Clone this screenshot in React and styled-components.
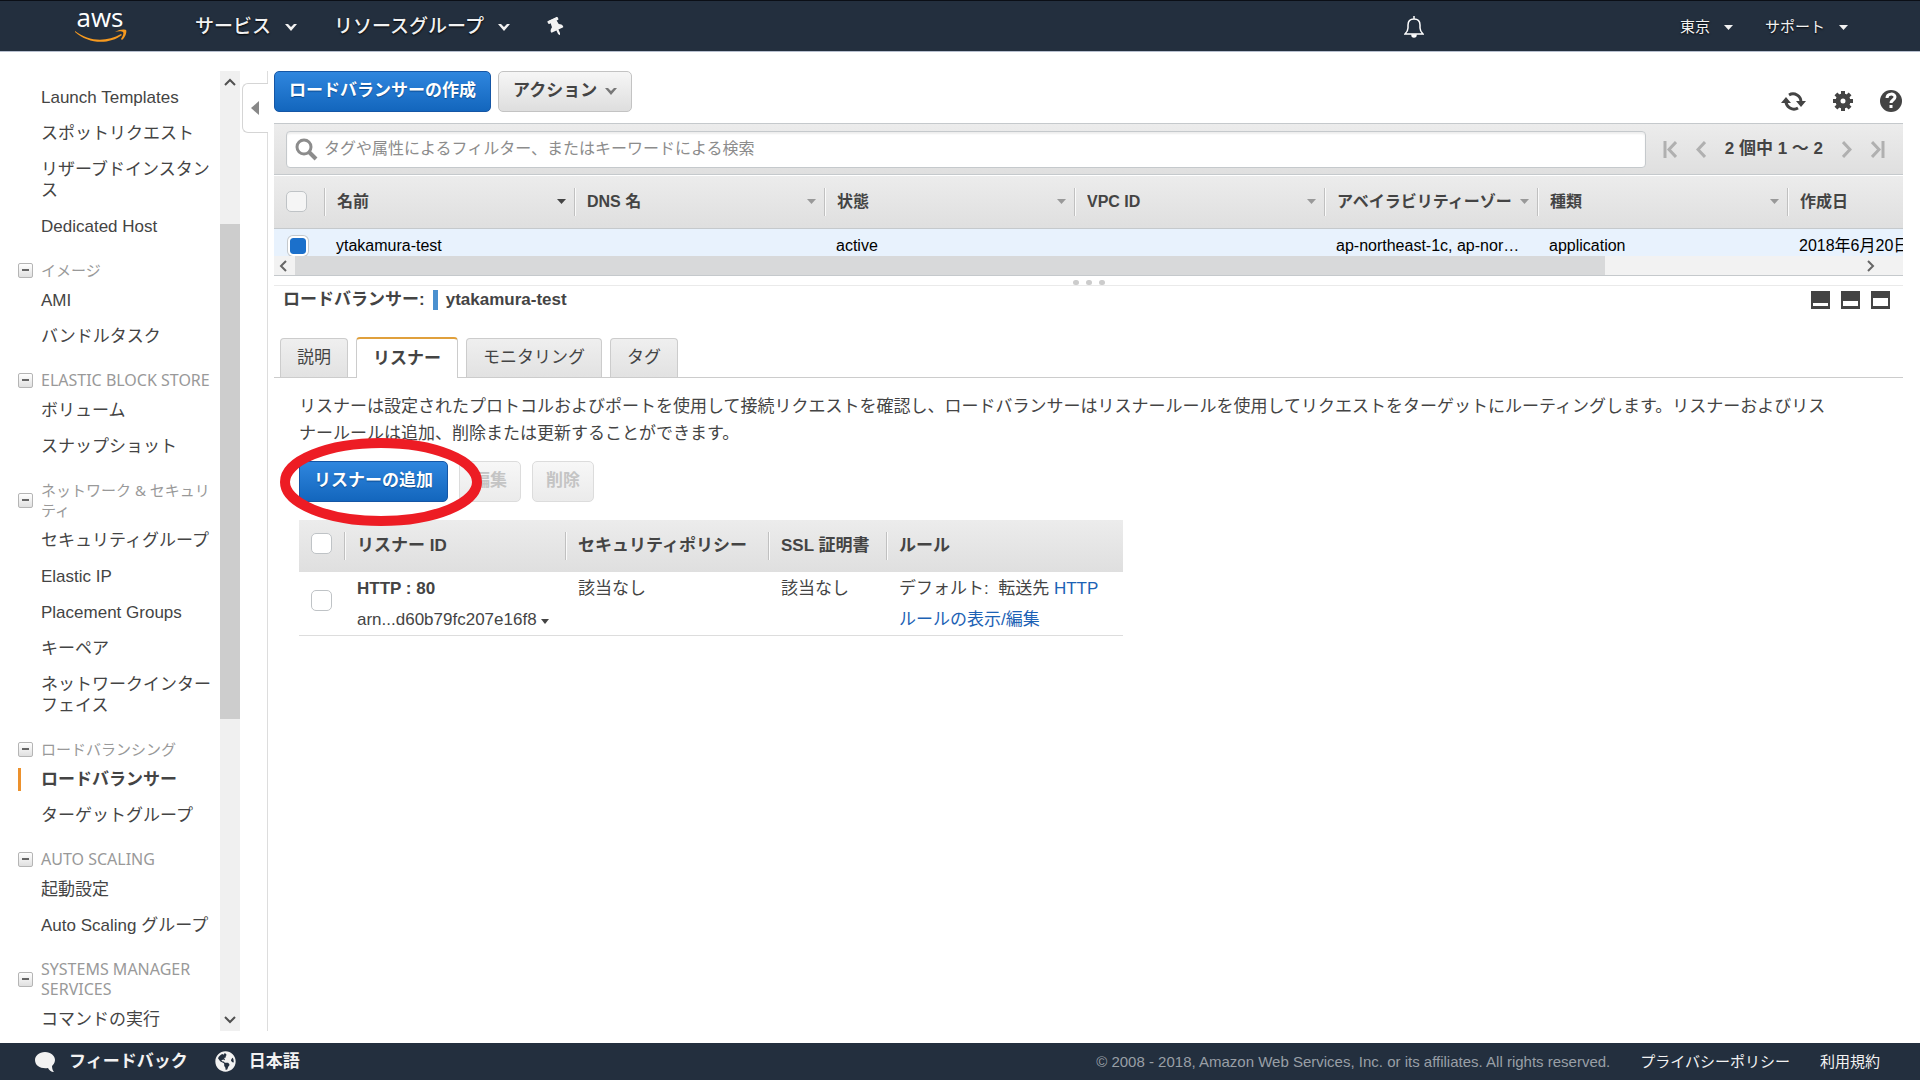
import React from 'react';
import styled, { createGlobalStyle, css } from 'styled-components';
import { FaGlobeAmericas, FaThumbtack } from 'react-icons/fa';

const GlobalStyle = createGlobalStyle`
  * { box-sizing: border-box; }
  html, body, #root { height: 100%; }
  body {
    margin: 0;
    overflow: hidden;
    background: #fff;
    color: #444;
    font: 17px/22px "Liberation Sans", "Noto Sans CJK JP", sans-serif;
  }
  button, input { font: inherit; }
  a { color: inherit; text-decoration: none; }
`;

const Page = styled.div`
  height: 100vh;
  display: flex;
  flex-direction: column;
`;

/* ---------- top bar ---------- */

const TopBar = styled.header`
  display: flex;
  align-items: center;
  flex: none;
  height: 52px;
  padding: 2px 72px 0 74px;
  background: #232f3e;
  border-top: 1px solid #0b0f16;
  border-bottom: 1px solid #b8c0d0;
  color: #f2f2f2;
`;

const Logo = styled.a`
  display: flex;
  margin-right: 67px;
  svg { overflow: visible; }
`;

const NavButton = styled.button`
  display: flex;
  align-items: center;
  gap: 14px;
  padding: 0;
  margin-right: ${(p) => (p.$small ? 0 : 37)}px;
  margin-left: ${(p) => (p.$small ? 32 : 0)}px;
  border: 0;
  background: none;
  color: #f2f2f2;
  font-size: ${(p) => (p.$small ? 15 : 19)}px;
  font-weight: ${(p) => (p.$small ? 400 : 500)};
  text-shadow: 0 1px 2px #000;
`;

const IconButton = styled.button`
  display: flex;
  align-items: center;
  padding: 0;
  border: 0;
  background: none;
  color: inherit;
`;

const PinIcon = styled(FaThumbtack)`
  width: 18px;
  height: 18px;
  transform: rotate(-25deg);
`;

const Spacer = styled.div`
  flex: 1;
`;

const RightNav = styled.div`
  display: flex;
  margin-left: 224px;
`;

/* ---------- body ---------- */

const Body = styled.div`
  flex: 1;
  min-height: 0;
  display: flex;
  padding: 19px 17px 12px 0;
`;

const Sidebar = styled.aside`
  width: 220px;
  flex: none;
  overflow: hidden;
  padding-top: 8px;
`;

const Group = styled.section`
  margin-bottom: 16px;
`;

const GroupTitle = styled.h3`
  display: flex;
  align-items: center;
  gap: 8px;
  margin: 0 0 2px;
  padding-left: 18px;
  color: #999;
  font: 400 ${(p) => (p.$latin ? 16 : 15)}px/20px "Noto Sans", "Noto Sans CJK JP", sans-serif;
`;

const Toggle = styled.button`
  flex: none;
  display: flex;
  align-items: center;
  justify-content: center;
  width: 15px;
  height: 15px;
  padding: 0;
  border: 1px solid #b5b5b5;
  border-radius: 2px;
  background: linear-gradient(#fff, #e0e0e0);
  &::before {
    content: '';
    width: 7px;
    height: 2px;
    background: #666;
  }
`;

const MenuItem = styled.a`
  display: block;
  padding: 8px 0 7px 41px;
  line-height: 21px;
  color: #444;
  ${(p) => p.$active && css`
    font-weight: 700;
    background: linear-gradient(#ec912d, #ec912d) 18px 7px / 3px 23px no-repeat;
  `}
`;

const ScrollBar = styled.div`
  flex: none;
  width: 20px;
  display: flex;
  flex-direction: column;
  align-items: center;
  padding: 6px 0;
  background: #f0f0f0;
  color: #505050;
`;

const ScrollThumb = styled.div`
  width: 100%;
  height: 495px;
  margin: 135px 0 auto;
  background: #cdcdcd;
`;

const Divider = styled.div`
  flex: none;
  width: 28px;
  margin-right: 6px;
  border-right: 1px solid #ddd;
`;

const Collapse = styled.button`
  display: flex;
  align-items: center;
  justify-content: center;
  width: 26px;
  height: 50px;
  margin: 12px 0 0 2px;
  padding: 0 2px 0 0;
  border: 1px solid #d5d5d5;
  border-right: 0;
  border-radius: 6px 0 0 6px;
  background: #fff;
  color: #888;
`;

const Main = styled.main`
  flex: 1;
  min-width: 0;
  display: flex;
  flex-direction: column;
`;

const Toolbar = styled.div`
  display: flex;
  gap: 7px;
`;

const Tools = styled.div`
  display: flex;
  gap: 27px;
  margin: 19px 1px 0 auto;
  color: #444;
`;

const Button = styled.button`
  display: flex;
  align-items: center;
  gap: 8px;
  height: 41px;
  padding: 0 14px 2px;
  border: 1px solid #c3c3c3;
  border-radius: 5px;
  background: linear-gradient(#f6f6f6, #dedede);
  color: #444;
  font-weight: 700;
  svg { color: #777; }
  ${(p) => p.$primary && css`
    border-color: #1556a5;
    background: linear-gradient(#2f86de, #1366bd);
    color: #fff;
    text-shadow: 0 1px 1px #0b4a8f;
  `}
  &:disabled {
    padding: 0 13px 2px;
    border-color: #dcdcdc;
    background: linear-gradient(#f7f7f7, #ebebeb);
    color: #c4c4c4;
  }
`;

const FilterBar = styled.div`
  display: flex;
  align-items: center;
  gap: 17px;
  height: 52px;
  margin-top: 11px;
  padding: 0 18px 0 12px;
  border-top: 1px solid #c5c9cc;
  border-bottom: 1px solid #c5c9cc;
  background: linear-gradient(#ececec, #dfdfdf);
`;

const SearchBox = styled.label`
  flex: 1;
  display: flex;
  align-items: center;
  gap: 4px;
  height: 37px;
  padding: 0 8px;
  border: 1px solid #c5c9cc;
  border-radius: 4px;
  background: #fff;
  box-shadow: inset 0 2px 2px #eee;
  color: #8c8c8c;
`;

const SearchInput = styled.input`
  flex: 1;
  border: 0;
  outline: 0;
  background: none;
  font-size: 16px;
  &::placeholder { color: #8c8c8c; opacity: 1; }
`;

const Pager = styled.div`
  display: flex;
  align-items: center;
  gap: 19px;
  color: #444;
  font-weight: 700;
  & > button { color: #b0b0b0; }
`;

const GridWrap = styled.div`
  height: 100px;
  margin-top: 1px;
  overflow: hidden;
  display: flex;
  flex-direction: column;
  border-bottom: 1px solid #c5c9cc;
`;

const Grid = styled.table`
  width: 100%;
  table-layout: fixed;
  border-collapse: collapse;
  white-space: nowrap;
  font-size: 16px;
  th {
    height: 52px;
    padding: 0;
    border-bottom: 1px solid #c5c9cc;
    text-align: left;
    background: linear-gradient(#ececec, #dfdfdf);
  }
  td {
    height: 28px;
    padding: 7px 0 0 12px;
    overflow: hidden;
    background: #e8f2fd;
    color: #000;
    line-height: 20px;
  }
`;

const HeadCell = styled.div`
  display: flex;
  align-items: center;
  gap: 2px;
  height: 28px;
  padding: 0 8px 0 12px;
  overflow: hidden;
  border-left: ${(p) => (p.$plain ? '0' : '1px solid #c0c0c0')};
  box-shadow: ${(p) => (p.$plain ? 'none' : 'inset 1px 0 #fafafa')};
  color: ${(p) => (p.$sorted ? '#444' : '#999')};
  span {
    flex: 1;
    min-width: 0;
    overflow: hidden;
    color: #444;
  }
`;

const Check = styled.input`
  appearance: none;
  display: block;
  width: 21px;
  height: 21px;
  margin: 0;
  border: 1px solid #bfc3c6;
  border-radius: 5px;
  background: ${(p) => (p.$soft ? '#f5f5f5' : '#fff')};
  &:checked {
    width: 20px;
    height: 20px;
    margin-left: 2px;
    border: 2px solid #fff;
    background: #1b70cb;
    background-clip: padding-box;
    box-shadow: 0 0 0 1px #c5c9cc;
  }
`;

const HScroll = styled.div`
  flex: 1;
  display: flex;
  align-items: center;
  gap: 5px;
  padding: 0 27px 0 4px;
  background: #f2f2f2;
  color: #666;
`;

const HThumb = styled.div`
  width: 82%;
  margin-right: auto;
  align-self: stretch;
  background: #d8d9da;
`;

const Splitter = styled.div`
  display: flex;
  justify-content: center;
  align-items: flex-end;
  gap: 7px;
  height: 10px;
  border-bottom: 1px solid #eaeaea;
  span {
    width: 6px;
    height: 5px;
    border-radius: 3px;
    background: #ccc;
  }
`;

const DetailHead = styled.div`
  display: flex;
  align-items: center;
  gap: 8px;
  padding: 3px 13px 0 9px;
  font-weight: 700;
`;

const Marker = styled.span`
  width: 5px;
  height: 20px;
  background: #4a90cf;
`;

const PanelIcons = styled.div`
  display: flex;
  gap: 11px;
  margin-left: auto;
`;

const Tabs = styled.div`
  display: flex;
  align-items: flex-end;
  gap: 8px;
  margin-top: 26px;
  padding-left: 6px;
  border-bottom: 1px solid #ccc;
`;

const Tab = styled.button`
  height: 39px;
  padding: 0 16px;
  border: 1px solid #ccc;
  border-bottom: 0;
  border-radius: 4px 4px 0 0;
  background: linear-gradient(#efefef, #e2e2e2);
  color: #444;
  ${(p) => p.$active && css`
    height: 41px;
    margin-bottom: -1px;
    border-top: 2px solid #e0a03c;
    background: #fff;
    font-weight: 700;
  `}
`;

const Description = styled.p`
  margin: 0 0 14px;
  padding: 15px 66px 0 25px;
  line-height: 27px;
`;

const Actions = styled.div`
  position: relative;
  display: flex;
  gap: 11px;
  padding-left: 25px;
`;

const Highlight = styled.svg`
  position: absolute;
  left: 6px;
  top: -24px;
  pointer-events: none;
`;

const Listeners = styled.table`
  margin: 18px 0 0 25px;
  width: 824px;
  border-collapse: collapse;
  table-layout: fixed;
  border-bottom: 1px solid #ddd;
  th {
    height: 52px;
    padding: 0;
    text-align: left;
    background: linear-gradient(#ececec, #dfdfdf);
  }
  td {
    padding: 1px 0 0 13px;
    vertical-align: top;
    line-height: 31px;
    white-space: nowrap;
  }
  th:first-child {
    padding-bottom: 5px;
  }
  td:first-child {
    padding: 0 0 6px 12px;
    vertical-align: middle;
  }
  td svg { vertical-align: 1px; }
`;

const Link = styled.a`
  color: #1c62b5;
`;

/* ---------- footer ---------- */

const Footer = styled.footer`
  display: flex;
  align-items: center;
  flex: none;
  height: 37px;
  padding: 0 40px 0 34px;
  gap: 27px;
  background: #232f3e;
  color: #f2f2f2;
  font-size: 15px;
`;

const FootButton = styled.button`
  display: flex;
  align-items: center;
  gap: 13px;
  padding: 0;
  border: 0;
  background: none;
  color: #f2f2f2;
  font-size: 17px;
  font-weight: 700;
`;

const Legal = styled.div`
  display: flex;
  gap: 30px;
  margin-left: auto;
`;

const Copyright = styled.span`
  color: #999fa6;
`;

const Caret = ({ size = 9 }) => (
  <svg width={size} height="5" viewBox="0 0 10 6" preserveAspectRatio="none" fill="currentColor">
    <path d="M0 0h10L5 6z" />
  </svg>
);

const Chevron = ({ dir = 'down' }) => {
  const turn = { down: 0, left: 90, up: 180, right: 270 }[dir];
  return (
    <svg width="12" height="12" viewBox="0 0 12 12" fill="none" stroke="currentColor" strokeWidth="2">
      <path d="M1 4l5 5 5-5" transform={`rotate(${turn} 6 6)`} />
    </svg>
  );
};

const PageArrow = ({ next, bar }) => {
  const w = bar ? 14 : 10;
  return (
    <svg width={w} height="17" viewBox={`0 0 ${w} 17`} fill="none" stroke="currentColor" strokeWidth="3">
      <g transform={next ? undefined : `translate(${w} 0) scale(-1 1)`}>
        <path d="M1 1l7 7.500L1 16" />
        {bar && <path d="M12 0v17" />}
      </g>
    </svg>
  );
};

const NavChevron = () => (
  <svg width="12" height="8" viewBox="0 0 12 8" fill="currentColor">
    <path d="M0 1h3l3 3 3-3h3L6 8z" />
  </svg>
);

const AwsLogo = () => (
  <svg width="54" height="36" viewBox="0 0 54 36">
    <text x="26" y="18" textAnchor="middle" fill="#fff" fontFamily="Open Sans, sans-serif" fontSize="26">aws</text>
    <path d="M1 22c14 11 32 11 46 3l1 1C35 36 14 35 1 23z" fill="#f79a1f" />
    <path d="M41 23c4-3 10-3 11-2s0 7-4 10l-1-1c2-3 3-6 2-7s-5-1-8 0z" fill="#f79a1f" />
  </svg>
);

const Bell = () => (
  <svg width="20" height="22" viewBox="0 0 20 22" fill="none" stroke="#fff" strokeWidth="1.500">
    <path d="M10 0v3M1 18h18c-2-2-3-4-3-6V9c0-4-2-6-6-6S4 5 4 9v3c0 2-1 4-3 6z" />
    <path d="M8 19a2 2 0 0 0 4 0z" fill="#fff" />
  </svg>
);

const Refresh = () => (
  <svg width="25" height="21" viewBox="0 0 25 21">
    <path d="M8 4a8 8 0 0 1 12 7M17 17A8 8 0 0 1 5 10" fill="none" stroke="currentColor" strokeWidth="3" />
    <path d="M15 10h10l-5 6zM0 12h10L5 6z" fill="currentColor" />
  </svg>
);

const Gear = () => (
  <svg width="20" height="20" viewBox="0 0 20 20">
    <circle cx="10" cy="10" r="5" fill="none" stroke="currentColor" strokeWidth="5" />
    {[0, 45, 90, 135].map((a) => (
      <path key={a} d="M8 0h4v4H8zM8 16h4v4H8z" fill="currentColor" transform={`rotate(${a} 10 10)`} />
    ))}
  </svg>
);

const Help = () => (
  <svg width="22" height="22" viewBox="0 0 22 22">
    <circle cx="11" cy="11" r="11" fill="currentColor" />
    <path d="M7 8c0-5 8-5 8-1 0 3-4 3-4 6" fill="none" stroke="#fff" strokeWidth="3" />
    <path d="M9.500 15h3v3h-3z" fill="#fff" />
  </svg>
);

const Magnifier = () => (
  <svg width="23" height="23" viewBox="0 0 23 23" fill="none" stroke="#8c8c8c">
    <circle cx="9" cy="9" r="7" strokeWidth="3" />
    <path d="M14 14l7 7" strokeWidth="4" />
  </svg>
);

const Panel = ({ y }) => (
  <svg width="19" height="18" viewBox="0 0 19 18">
    <path d="M0 0h19v18H0z" fill="#444" />
    <path d={`M2 ${y}h15v${15 - y}H2z`} fill="#fff" />
  </svg>
);

const Bubble = () => (
  <svg width="22" height="22" viewBox="0 0 22 22" fill="#f2f2f2">
    <path d="M11 1c6 0 10 4 10 8 0 3-2 5-3 6 0 3 1 5 2 6-3 0-5-2-6-4-7 1-13-2-13-8 0-4 4-8 10-8z" />
  </svg>
);

const menu = [
  { items: ['Launch Templates', 'スポットリクエスト', 'リザーブドインスタンス', 'Dedicated Host'] },
  { title: 'イメージ', items: ['AMI', 'バンドルタスク'] },
  { title: 'ELASTIC BLOCK STORE', latin: true, items: ['ボリューム', 'スナップショット'] },
  {
    title: 'ネットワーク & セキュリティ',
    items: ['セキュリティグループ', 'Elastic IP', 'Placement Groups', 'キーペア', 'ネットワークインターフェイス'],
  },
  { title: 'ロードバランシング', items: ['ロードバランサー', 'ターゲットグループ'] },
  { title: 'AUTO SCALING', latin: true, items: ['起動設定', 'Auto Scaling グループ'] },
  { title: 'SYSTEMS MANAGER SERVICES', latin: true, items: ['コマンドの実行'] },
];

const columns = [
  { name: '名前', width: 250, value: 'ytakamura-test' },
  { name: 'DNS 名', width: 250, value: '' },
  { name: '状態', width: 250, value: 'active' },
  { name: 'VPC ID', width: 250, value: '' },
  { name: 'アベイラビリティーゾー', width: 213, value: 'ap-northeast-1c, ap-nor…' },
  { name: '種類', width: 250, value: 'application' },
  { name: '作成日', value: '2018年6月20日' },
];

const tabs = ['説明', 'リスナー', 'モニタリング', 'タグ'];

function App() {
  return (
    <Page>
      <GlobalStyle />
      <TopBar>
        <Logo href="#" aria-label="aws"><AwsLogo /></Logo>
        <NavButton>サービス <NavChevron /></NavButton>
        <NavButton>リソースグループ <NavChevron /></NavButton>
        <IconButton aria-label="ピン"><PinIcon /></IconButton>
        <Spacer />
        <IconButton aria-label="通知"><Bell /></IconButton>
        <RightNav>
          <NavButton $small>東京 <Caret /></NavButton>
          <NavButton $small>サポート <Caret /></NavButton>
        </RightNav>
      </TopBar>

      <Body>
        <Sidebar>
          {menu.map((group, i) => (
            <Group key={i}>
              {group.title && (
                <GroupTitle $latin={group.latin}>
                  <Toggle aria-label={group.title} />
                  {group.title}
                </GroupTitle>
              )}
              {group.items.map((item) => (
                <MenuItem key={item} href="#" $active={item === 'ロードバランサー'}>{item}</MenuItem>
              ))}
            </Group>
          ))}
        </Sidebar>
        <ScrollBar>
          <Chevron dir="up" />
          <ScrollThumb />
          <Chevron />
        </ScrollBar>
        <Divider>
          <Collapse aria-label="閉じる">
            <svg width="8" height="14" viewBox="0 0 8 14" fill="currentColor"><path d="M8 0v14L0 7z" /></svg>
          </Collapse>
        </Divider>

        <Main>
          <Toolbar>
            <Button $primary>ロードバランサーの作成</Button>
            <Button>アクション <NavChevron /></Button>
            <Tools>
              <IconButton aria-label="更新"><Refresh /></IconButton>
              <IconButton aria-label="設定"><Gear /></IconButton>
              <IconButton aria-label="ヘルプ"><Help /></IconButton>
            </Tools>
          </Toolbar>

          <FilterBar>
            <SearchBox>
              <Magnifier />
              <SearchInput placeholder="タグや属性によるフィルター、またはキーワードによる検索" />
            </SearchBox>
            <Pager>
              <IconButton aria-label="最初"><PageArrow bar /></IconButton>
              <IconButton aria-label="前"><PageArrow /></IconButton>
              <span>2 個中 1 ～ 2</span>
              <IconButton aria-label="次"><PageArrow next /></IconButton>
              <IconButton aria-label="最後"><PageArrow next bar /></IconButton>
            </Pager>
          </FilterBar>

          <GridWrap>
            <Grid>
              <colgroup>
                <col width="50" />
                {columns.map((c) => <col key={c.name} width={c.width} />)}
              </colgroup>
              <thead>
                <tr>
                  <th><HeadCell $plain><Check type="checkbox" $soft aria-label="すべて選択" /></HeadCell></th>
                  {columns.map((c, i) => (
                    <th key={c.name}>
                      <HeadCell $sorted={i === 0}>
                        <span>{c.name}</span>
                        {c.width && <Caret />}
                      </HeadCell>
                    </th>
                  ))}
                </tr>
              </thead>
              <tbody>
                <tr>
                  <td><Check type="checkbox" defaultChecked aria-label="ytakamura-test" /></td>
                  {columns.map((c) => <td key={c.name}>{c.value}</td>)}
                </tr>
              </tbody>
            </Grid>
            <HScroll>
              <Chevron dir="left" />
              <HThumb />
              <Chevron dir="right" />
            </HScroll>
          </GridWrap>
          <Splitter><span /><span /><span /></Splitter>

          <DetailHead>
            ロードバランサー: <Marker /> ytakamura-test
            <PanelIcons>
              {[12, 10, 7].map((y) => (
                <IconButton key={y} aria-label="パネル"><Panel y={y} /></IconButton>
              ))}
            </PanelIcons>
          </DetailHead>
          <Tabs>
            {tabs.map((t) => <Tab key={t} $active={t === 'リスナー'}>{t}</Tab>)}
          </Tabs>
          <Description>
            リスナーは設定されたプロトコルおよびポートを使用して接続リクエストを確認し、ロードバランサーはリスナールールを使用してリクエストをターゲットにルーティングします。リスナーおよびリスナールールは追加、削除または更新することができます。
          </Description>
          <Actions>
            <Button $primary>リスナーの追加</Button>
            <Button disabled>編集</Button>
            <Button disabled>削除</Button>
            <Highlight width="202" height="90" viewBox="0 0 202 90">
              <ellipse cx="101" cy="45" rx="96" ry="39" fill="none" stroke="#ed1c24" strokeWidth="10" />
            </Highlight>
          </Actions>

          <Listeners>
            <colgroup>
              <col width="45" />
              <col width="221" />
              <col width="203" />
              <col width="118" />
              <col />
            </colgroup>
            <thead>
              <tr>
                <th><HeadCell $plain><Check type="checkbox" aria-label="すべて選択" /></HeadCell></th>
                <th><HeadCell><span>リスナー ID</span></HeadCell></th>
                <th><HeadCell><span>セキュリティポリシー</span></HeadCell></th>
                <th><HeadCell><span>SSL 証明書</span></HeadCell></th>
                <th><HeadCell><span>ルール</span></HeadCell></th>
              </tr>
            </thead>
            <tbody>
              <tr>
                <td><Check type="checkbox" aria-label="HTTP : 80" /></td>
                <td><b>HTTP : 80</b><br />arn...d60b79fc207e16f8 <Caret size={8} /></td>
                <td>該当なし</td>
                <td>該当なし</td>
                <td>デフォルト:&nbsp; 転送先 <Link href="#">HTTP</Link><br /><Link href="#">ルールの表示/編集</Link></td>
              </tr>
            </tbody>
          </Listeners>
        </Main>
      </Body>

      <Footer>
        <FootButton><Bubble /> フィードバック</FootButton>
        <FootButton><FaGlobeAmericas size={21} /> 日本語</FootButton>
        <Legal>
          <Copyright>© 2008 - 2018, Amazon Web Services, Inc. or its affiliates. All rights reserved.</Copyright>
          <a href="#">プライバシーポリシー</a>
          <a href="#">利用規約</a>
        </Legal>
      </Footer>
    </Page>
  );
}

export default App;
